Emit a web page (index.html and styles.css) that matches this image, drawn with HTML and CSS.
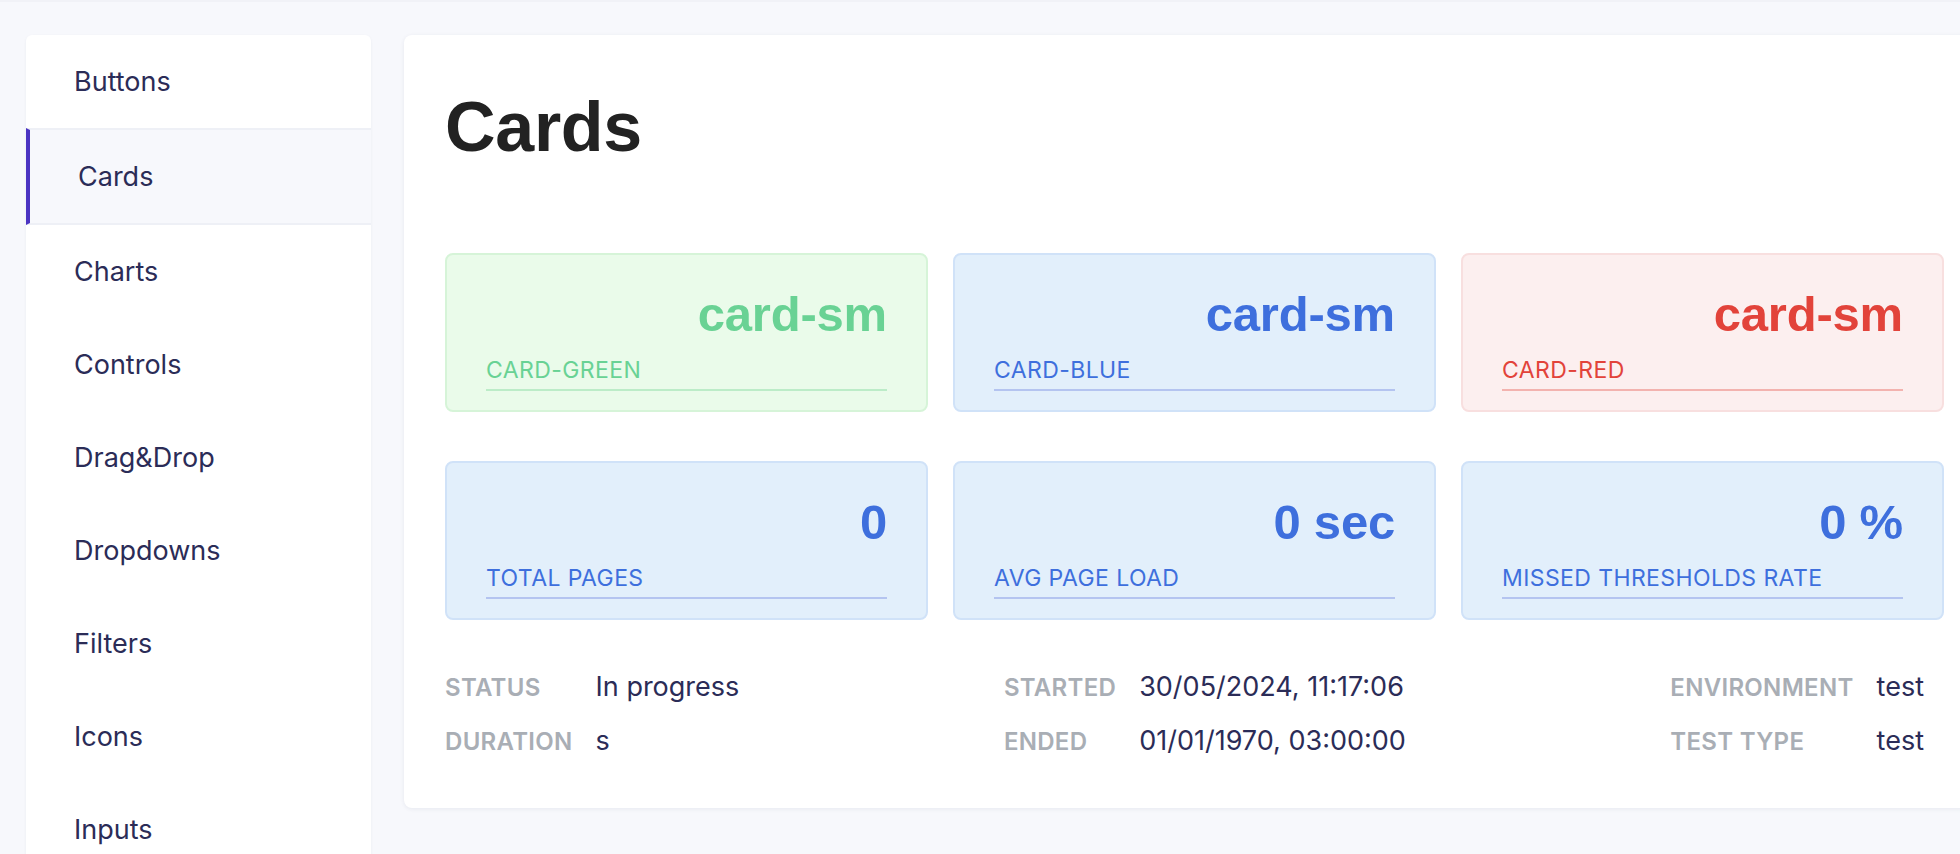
FILE: index.html
```html
<!DOCTYPE html>
<html lang="en">
<head>
<meta charset="utf-8">
<title>Cards</title>
<link rel="stylesheet" href="styles.css">
</head>
<body>
<div class="topline"></div>
<div class="layout">
  <nav class="sidebar">
    <a class="nav-item">Buttons</a>
    <a class="nav-item active">Cards</a>
    <a class="nav-item">Charts</a>
    <a class="nav-item">Controls</a>
    <a class="nav-item">Drag&amp;Drop</a>
    <a class="nav-item">Dropdowns</a>
    <a class="nav-item">Filters</a>
    <a class="nav-item">Icons</a>
    <a class="nav-item">Inputs</a>
  </nav>
  <main class="main-card">
    <h1 class="page-title">Cards</h1>
    <div class="card-grid">
      <div class="stat-card green">
        <div class="stat-value">card-sm</div>
        <div class="stat-label">CARD-GREEN</div>
      </div>
      <div class="stat-card blue">
        <div class="stat-value">card-sm</div>
        <div class="stat-label">CARD-BLUE</div>
      </div>
      <div class="stat-card red">
        <div class="stat-value">card-sm</div>
        <div class="stat-label">CARD-RED</div>
      </div>
      <div class="stat-card blue">
        <div class="stat-value">0</div>
        <div class="stat-label">TOTAL PAGES</div>
      </div>
      <div class="stat-card blue">
        <div class="stat-value">0 sec</div>
        <div class="stat-label">AVG PAGE LOAD</div>
      </div>
      <div class="stat-card blue">
        <div class="stat-value">0 %</div>
        <div class="stat-label">MISSED THRESHOLDS RATE</div>
      </div>
    </div>
    <div class="info-row">
      <dl class="info-group">
        <dt>STATUS</dt><dd>In progress</dd>
        <dt>DURATION</dt><dd>s</dd>
      </dl>
      <dl class="info-group">
        <dt>STARTED</dt><dd>30/05/2024, 11:17:06</dd>
        <dt>ENDED</dt><dd>01/01/1970, 03:00:00</dd>
      </dl>
      <dl class="info-group">
        <dt>ENVIRONMENT</dt><dd>test</dd>
        <dt>TEST TYPE</dt><dd>test</dd>
      </dl>
    </div>
  </main>
</div>
</body>
</html>
```
FILE: styles.css
```css
html, body {
  margin: 0;
  padding: 0;
  overflow: hidden;
  background: #f7f8fc;
}

body {
  font-family: Inter, "Noto Sans", sans-serif;
  color: #2b2c57;
}

.topline {
  height: 2px;
  background: #f1f2f7;
}

.layout {
  display: flex;
  align-items: flex-start;
  gap: 33px;
  padding: 33px 0 0 26px;
}

.sidebar {
  flex: 0 0 345px;
  display: flex;
  flex-direction: column;
  background: #ffffff;
  border-radius: 6px;
  box-shadow: 0 1px 3px rgba(40, 45, 90, 0.06);
}

.nav-item {
  display: block;
  padding: 31px 48px 30px 44px;
  font-size: 27px;
  line-height: 32px;
  color: #2b2c57;
  border-left: 4px solid transparent;
}

.nav-item.active {
  background: #f7f8fc;
  border-left-color: #4b34c2;
  border-top: 2px solid #eef0f6;
  border-bottom: 2px solid #eef0f6;
  padding-left: 48px;
}

.main-card {
  flex: 0 0 1581px;
  box-sizing: border-box;
  background: #ffffff;
  border-radius: 8px;
  box-shadow: 0 1px 4px rgba(40, 45, 90, 0.08);
  padding: 50px 41px 50px 41px;
}

.page-title {
  margin: 0;
  font-family: "Liberation Sans", Arial, sans-serif;
  font-weight: 700;
  font-size: 70px;
  line-height: 84px;
  letter-spacing: -0.3px;
  color: #222222;
}

.card-grid {
  display: grid;
  grid-template-columns: repeat(3, 1fr);
  column-gap: 25px;
  row-gap: 49px;
  margin-top: 84px;
}

.stat-card {
  border: 2px solid;
  border-radius: 8px;
  padding: 35px 39px 19px;
}

.stat-value {
  font-family: "Liberation Sans", Arial, sans-serif;
  font-weight: 700;
  font-size: 49px;
  line-height: 48px;
  letter-spacing: -0.2px;
  text-align: right;
}

.stat-label {
  margin-top: 19px;
  font-size: 23px;
  line-height: 26px;
  letter-spacing: 0.4px;
  padding-bottom: 6px;
  border-bottom: 2px solid;
}

.stat-card.green {
  background: #eafbea;
  border-color: #d6f4d8;
  color: #69d294;
}
.stat-card.green .stat-label { border-bottom-color: #bcecc8; }

.stat-card.blue {
  background: #e2effb;
  border-color: #d0e2f8;
  color: #3e6fdd;
}
.stat-card.blue .stat-label { border-bottom-color: #b4c4f0; }

.stat-card.red {
  background: #fcefef;
  border-color: #f8dfdf;
  color: #e2433a;
}
.stat-card.red .stat-label { border-bottom-color: #f3b3af; }

.info-row {
  display: flex;
  justify-content: space-between;
  margin-top: 51px;
  padding-right: 20px;
}

.info-group {
  margin: 0;
  display: grid;
  grid-template-columns: auto auto;
  column-gap: 23px;
  row-gap: 21px;
  align-items: baseline;
}

.info-group dt {
  font-size: 24px;
  font-weight: 600;
  line-height: 32px;
  color: #a9aeb5;
  letter-spacing: 0.3px;
}

.info-group dd {
  margin: 0;
  font-size: 27px;
  line-height: 32px;
  color: #2b2c57;
}
```
